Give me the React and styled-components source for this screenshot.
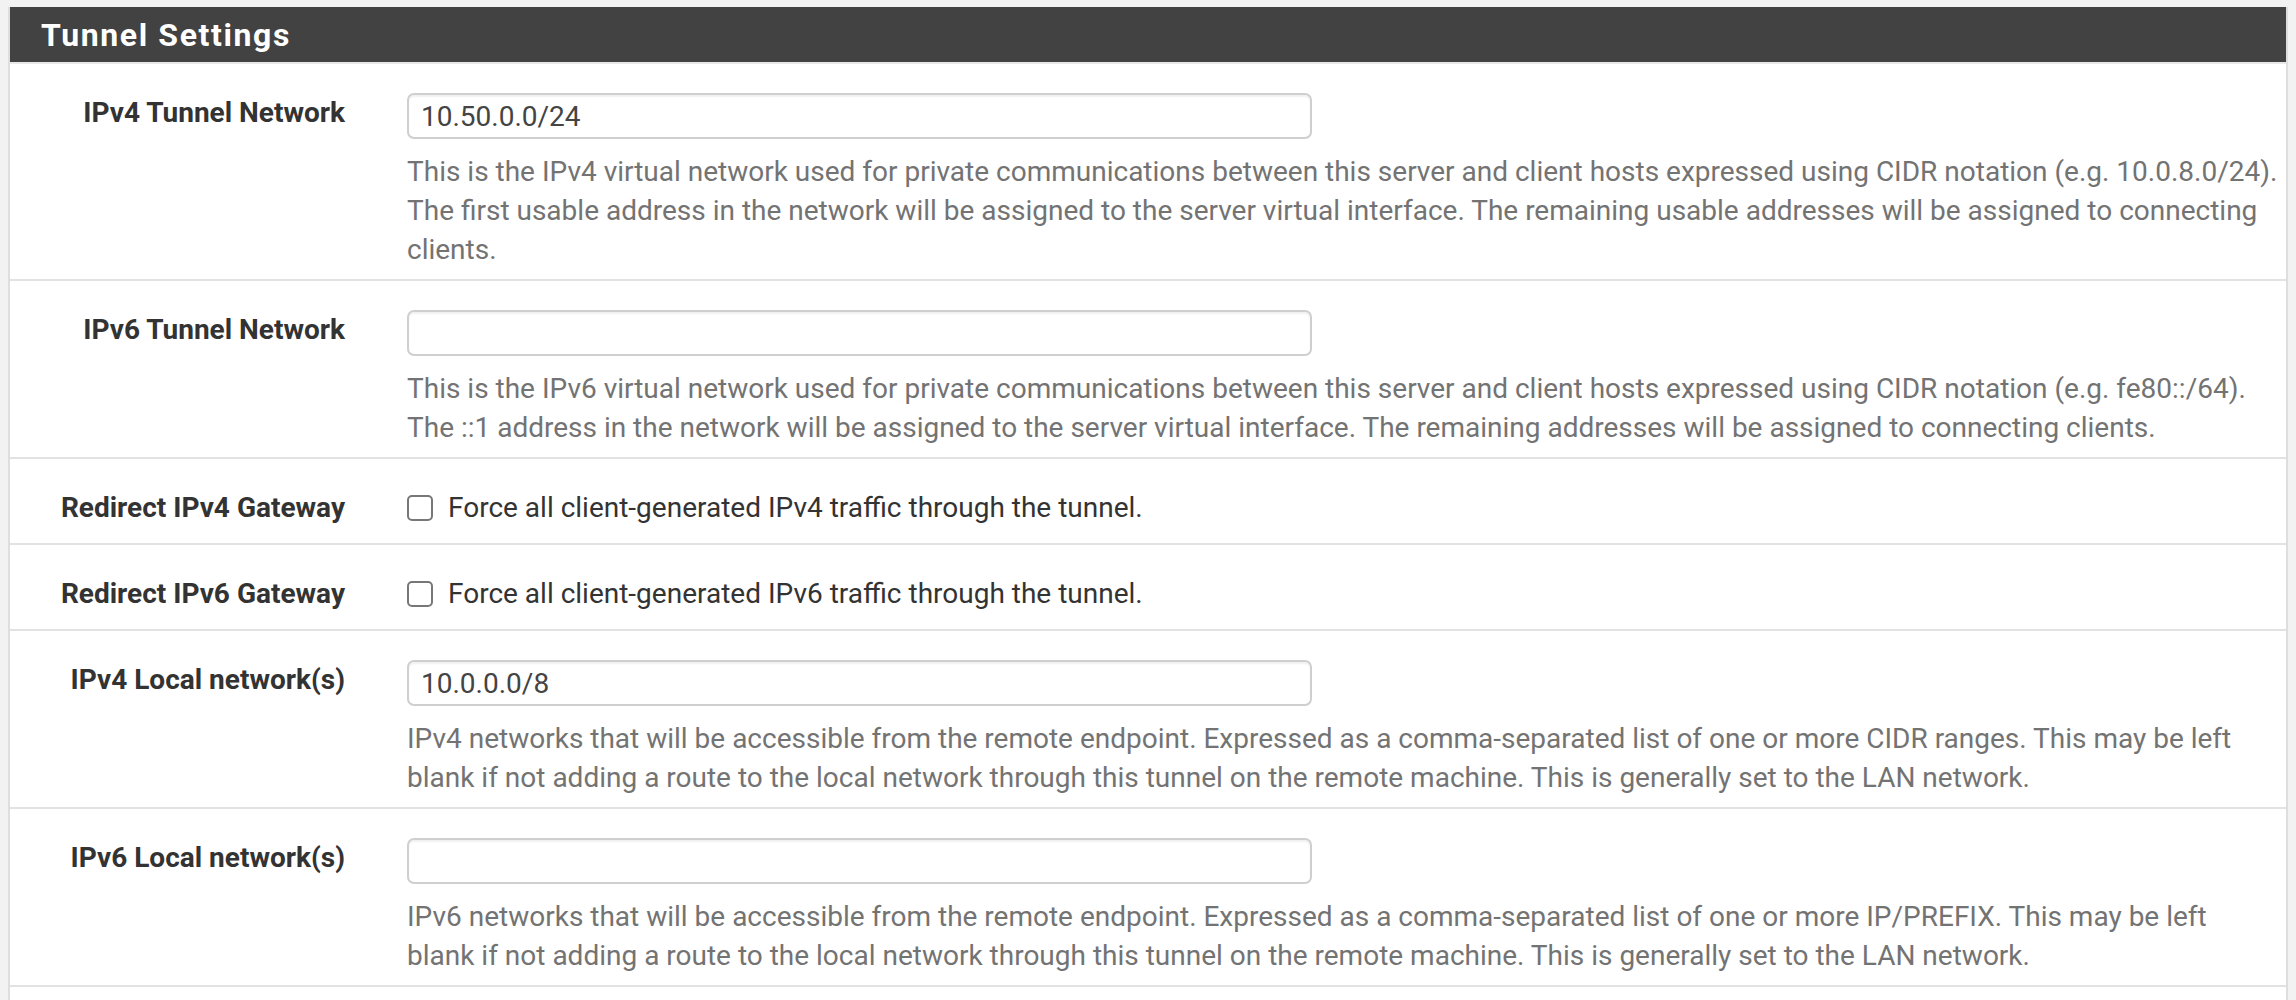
import React from "react";
import styled, { createGlobalStyle } from "styled-components";

const GlobalStyle = createGlobalStyle`
    html, body {
        margin: 0;
        padding: 0;
        background: #f2f2f2;
        font-family: Roboto, "Liberation Sans", Arial, sans-serif;
    }
`;

const rows = [
    {
        label: "IPv4 Tunnel Network",
        type: "input",
        value: "10.50.0.0/24",
        help: [
            "This is the IPv4 virtual network used for private communications between this server and client hosts expressed using CIDR notation (e.g. 10.0.8.0/24).",
            "The first usable address in the network will be assigned to the server virtual interface. The remaining usable addresses will be assigned to connecting",
            "clients."
        ]
    },
    {
        label: "IPv6 Tunnel Network",
        type: "input",
        value: "",
        help: [
            "This is the IPv6 virtual network used for private communications between this server and client hosts expressed using CIDR notation (e.g. fe80::/64).",
            "The ::1 address in the network will be assigned to the server virtual interface. The remaining addresses will be assigned to connecting clients."
        ]
    },
    {
        label: "Redirect IPv4 Gateway",
        type: "checkbox",
        text: "Force all client-generated IPv4 traffic through the tunnel."
    },
    {
        label: "Redirect IPv6 Gateway",
        type: "checkbox",
        text: "Force all client-generated IPv6 traffic through the tunnel."
    },
    {
        label: "IPv4 Local network(s)",
        type: "input",
        value: "10.0.0.0/8",
        help: [
            "IPv4 networks that will be accessible from the remote endpoint. Expressed as a comma-separated list of one or more CIDR ranges. This may be left",
            "blank if not adding a route to the local network through this tunnel on the remote machine. This is generally set to the LAN network."
        ]
    },
    {
        label: "IPv6 Local network(s)",
        type: "input",
        value: "",
        help: [
            "IPv6 networks that will be accessible from the remote endpoint. Expressed as a comma-separated list of one or more IP/PREFIX. This may be left",
            "blank if not adding a route to the local network through this tunnel on the remote machine. This is generally set to the LAN network."
        ]
    }
];

const App = () => {
    return (
        <>
            <GlobalStyle />
            <Panel>
                <PanelHeading>
                    <PanelTitle>Tunnel Settings</PanelTitle>
                </PanelHeading>
                {rows.map((row) => (
                    <FormRow key={row.label} $compact={row.type === "checkbox"}>
                        <FieldLabel>{row.label}</FieldLabel>
                        <FieldBody>
                            {row.type === "input" ? (
                                <>
                                    <TextInput type="text" defaultValue={row.value} />
                                    <HelpBlock>
                                        {row.help.map((line, i) => (
                                            <HelpLine key={i}>{line}</HelpLine>
                                        ))}
                                    </HelpBlock>
                                </>
                            ) : (
                                <CheckLabel>
                                    <CheckBox type="checkbox" />
                                    {row.text}
                                </CheckLabel>
                            )}
                        </FieldBody>
                    </FormRow>
                ))}
            </Panel>
        </>
    );
};

export default App;

const Panel = styled.div`
    margin: 7px 8px 0 8px;
    padding-bottom: 40px;
    background: #fff;
    border-left: 2px solid #dedede;
    border-right: 2px solid #dedede;
`;

const PanelHeading = styled.div`
    height: 55px;
    background: #424242;
    border-bottom: 2px solid #e8e8e8;
    display: flex;
    align-items: center;
    padding-left: 31px;
`;

const PanelTitle = styled.h2`
    margin: 0;
    color: #fff;
    font-size: 32px;
    font-weight: 700;
    letter-spacing: 1.6px;
`;

const FormRow = styled.div`
    display: grid;
    grid-template-columns: 365px 1fr;
    padding: 29px 0 ${(p) => (p.$compact ? "16px" : "10px")} 0;
    border-bottom: 2px solid #e2e2e2;
`;

const FieldLabel = styled.div`
    text-align: right;
    padding-right: 30px;
    font-size: 28px;
    line-height: 39px;
    font-weight: 700;
    color: #333;
`;

const FieldBody = styled.div`
    padding-left: 32px;
    padding-right: 20px;
    min-width: 0;
`;

const TextInput = styled.input`
    display: block;
    box-sizing: border-box;
    width: 905px;
    height: 46px;
    margin: 0;
    padding: 0 12px;
    border: 2px solid #cfcfcf;
    border-radius: 7px;
    box-shadow: inset 0 2px 2px rgba(0, 0, 0, 0.06);
    font-family: Roboto, "Liberation Sans", Arial, sans-serif;
    font-size: 28px;
    color: #444;
    background: #fff;
    outline: none;
`;

const HelpBlock = styled.div`
    margin-top: 13px;
    font-size: 28px;
    line-height: 39px;
    color: #737373;
`;

const HelpLine = styled.div`
    white-space: nowrap;
`;

const CheckLabel = styled.label`
    display: flex;
    align-items: center;
    gap: 15px;
    font-size: 28px;
    line-height: 39px;
    color: #333;
`;

const CheckBox = styled.input`
    appearance: none;
    box-sizing: border-box;
    width: 26px;
    height: 26px;
    margin: 0;
    border: 2px solid #777;
    border-radius: 5px;
    background: #fff;
`;
